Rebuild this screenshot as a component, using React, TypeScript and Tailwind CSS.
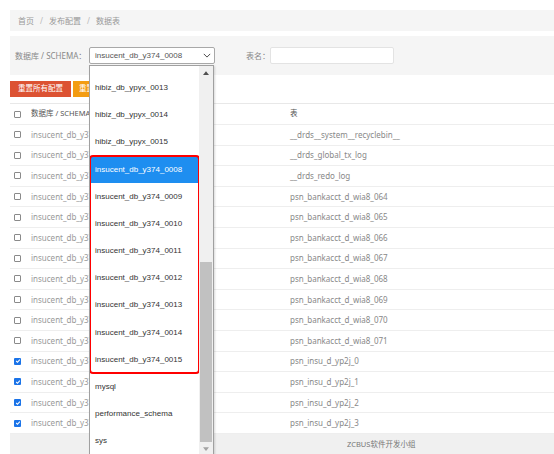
import React from "react";

const TABLES = [
  "__drds__system__recyclebin__",
  "__drds_global_tx_log",
  "__drds_redo_log",
  "psn_bankacct_d_wia8_064",
  "psn_bankacct_d_wia8_065",
  "psn_bankacct_d_wia8_066",
  "psn_bankacct_d_wia8_067",
  "psn_bankacct_d_wia8_068",
  "psn_bankacct_d_wia8_069",
  "psn_bankacct_d_wia8_070",
  "psn_bankacct_d_wia8_071",
  "psn_insu_d_yp2j_0",
  "psn_insu_d_yp2j_1",
  "psn_insu_d_yp2j_2",
  "psn_insu_d_yp2j_3",
];

const BEFORE = ["hibiz_db_ypyx_0013", "hibiz_db_ypyx_0014", "hibiz_db_ypyx_0015"];
const MARKED = ["0008", "0009", "0010", "0011", "0012", "0013", "0014", "0015"].map(
  (n) => `insucent_db_y374_${n}`
);
const AFTER = ["mysql", "performance_schema", "sys"];

function Checkbox({ checked }: { checked?: boolean }) {
  if (checked) {
    return (
      <span className="flex h-[7px] w-[7px] items-center justify-center rounded-[1px] bg-[#1a73e8]">
        <svg viewBox="0 0 10 10" className="h-[6px] w-[6px]">
          <polyline points="2,5 4.2,7.2 8,2.8" fill="none" stroke="#fff" strokeWidth="1.8" />
        </svg>
      </span>
    );
  }
  return <span className="block h-[7px] w-[7px] rounded-[1px] border border-[#8a8a8a] bg-white" />;
}

function Option({ label, selected }: { label: string; selected?: boolean }) {
  return (
    <div
      className={`flex h-[27.2px] items-center pl-[5px] text-[8px] ${
        selected ? "bg-[#1e8ef0] text-white" : "text-[#333]"
      }`}
    >
      {label}
    </div>
  );
}

function Arrow({ down }: { down?: boolean }) {
  return (
    <div className="flex h-[14px] items-center justify-center">
      <svg viewBox="0 0 8 5" className="h-[4px] w-[6px]">
        <polygon points={down ? "0,0 8,0 4,5" : "0,5 8,5 4,0"} fill={down ? "#a3a3a3" : "#505050"} />
      </svg>
    </div>
  );
}

export default function App() {
  const cjk = "font-['Noto_Sans','Noto_Sans_CJK_SC',sans-serif]";
  return (
    <div className={`relative h-[454px] w-[554px] overflow-hidden bg-white pl-[10px] pt-[10px] ${cjk}`}>
      {/* breadcrumb */}
      <div className="flex h-[21px] items-center bg-[#f5f5f5] pl-[8px] text-[8px] text-[#999]">
        <span>首页</span>
        <span className="mx-[6px] text-[#bbb]">/</span>
        <span>发布配置</span>
        <span className="mx-[6px] text-[#bbb]">/</span>
        <span>数据表</span>
      </div>

      {/* filters */}
      <div className="mt-[5px] flex h-[39px] items-center bg-[#f5f5f5] pl-[5px] text-[8px] text-[#888]">
        <span className="w-[74px] whitespace-nowrap">数据库 / SCHEMA：</span>
        <div className="flex h-[17px] w-[126px] items-center justify-between rounded-[2px] border border-[#a8a8a8] bg-white pl-[5px] pr-[3px] font-['Liberation_Sans',sans-serif] text-[8px] text-[#555]">
          <span>insucent_db_y374_0008</span>
          <svg viewBox="0 0 10 6" className="h-[5px] w-[8px]">
            <polyline points="1,1 5,5 9,1" fill="none" stroke="#444" strokeWidth="1.2" />
          </svg>
        </div>
        <span className="ml-[31px] w-[24px]">表名：</span>
        <div className="h-[17px] w-[124px] rounded-[2px] border border-[#e3e3e3] bg-white" />
      </div>

      {/* buttons */}
      <div className="mt-[6px] flex h-[16px] gap-[2px] text-[7.5px] text-white">
        <div className="flex w-[61px] items-center justify-center bg-[#dc5232]">重置所有配置</div>
        <div className="flex w-[61px] items-center bg-[#f39c12] pl-[6px]">
          <span className="w-[10px] overflow-hidden whitespace-nowrap">重置</span>
        </div>
      </div>

      {/* table */}
      <div className="mt-[6px] border-t border-[#e8e8e8]">
        <div className="grid h-[21px] grid-cols-[21px_259px_1fr] items-center border-b border-[#eee] text-[7.5px] text-[#555]">
          <span className="pl-[4px]">
            <Checkbox />
          </span>
          <span className="w-[58px] overflow-hidden whitespace-nowrap">数据库 / SCHEMA</span>
          <span>表</span>
        </div>
        {TABLES.map((t, i) => (
          <div
            key={t}
            className="grid h-[20.6px] grid-cols-[21px_259px_1fr] items-center border-b border-[#eee] text-[8px] text-[#999]"
          >
            <span className="pl-[4px]">
              <Checkbox checked={i >= 11} />
            </span>
            <span className="w-[58px] overflow-hidden whitespace-nowrap">insucent_db_y374_0008</span>
            <span className="text-[#888]">{t}</span>
          </div>
        ))}
      </div>

      {/* footer */}
      <div className="flex h-[21px] items-center bg-[#f0f0f0] pl-[337px] text-[7.5px] text-[#777]">
        ZCBUS软件开发小组
      </div>

      {/* open select list */}
      <div className="absolute left-[89px] top-[65px] flex h-[392px] w-[125px] border border-[#a0a0a0] bg-white font-['Liberation_Sans',sans-serif] shadow-[1px_1px_2px_rgba(0,0,0,0.15)]">
        <div className="flex-1 overflow-hidden">
          <div className="h-[8.4px]" />
          {BEFORE.map((o) => (
            <Option key={o} label={o} />
          ))}
          <div className="rounded-[3px] outline-2 outline-offset-[-1px] outline-[#f00]">
            {MARKED.map((o, i) => (
              <Option key={o} label={o} selected={i === 0} />
            ))}
          </div>
          {AFTER.map((o) => (
            <Option key={o} label={o} />
          ))}
        </div>
        <div className="flex w-[14px] flex-col bg-[#f0f0f0]">
          <Arrow />
          <div className="h-[182px]" />
          <div className="mx-[1px] h-[180px] bg-[#c1c1c1]" />
          <Arrow down />
        </div>
      </div>
    </div>
  );
}
